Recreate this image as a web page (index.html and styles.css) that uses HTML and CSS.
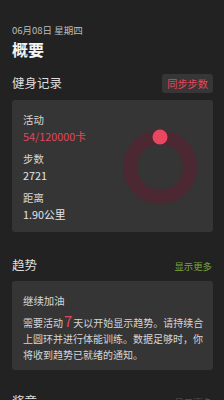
FILE: index.html
```html
<!DOCTYPE html>
<html lang="zh">
<head>
<meta charset="utf-8">
<link rel="stylesheet" href="styles.css">
</head>
<body>
<div class="page">
  <div class="date">06月08日 星期四</div>
  <h1 class="title">概要</h1>

  <div class="sec-head first">
    <span class="sec-title">健身记录</span>
    <span class="sync">同步步数</span>
  </div>
  <div class="card fit">
    <div class="stats">
      <div class="stat">
        <div class="label">活动</div>
        <div class="value pink">54/120000卡</div>
      </div>
      <div class="stat">
        <div class="label">步数</div>
        <div class="value">2721</div>
      </div>
      <div class="stat">
        <div class="label">距离</div>
        <div class="value">1.90公里</div>
      </div>
    </div>
    <svg class="ring" width="80" height="80" viewBox="0 0 80 80">
      <circle cx="40" cy="40" r="30" fill="none" stroke="#4c2832" stroke-width="14"/>
      <circle cx="40" cy="10" r="7.5" fill="#e8475f"/>
    </svg>
  </div>

  <div class="sec-head trend-head">
    <span class="sec-title">趋势</span>
    <span class="more">显示更多</span>
  </div>
  <div class="card trend">
    <div class="trend-title">继续加油</div>
    <p class="trend-text">需要活动<span class="big">7</span>天以开始显示趋势。请持续合上圆环并进行体能训练。数据足够时，你将收到趋势已就绪的通知。</p>
  </div>

  <div class="sec-head last">
    <span class="sec-title">奖章</span>
    <span class="more grey">显示更多</span>
  </div>
</div>
</body>
</html>
```

FILE: styles.css
```css
html, body {
  margin: 0;
  padding: 0;
  background: #222222;
  height: 100%;
  overflow: hidden;
}
body {
  font-family: "Noto Sans CJK SC", "Noto Sans", sans-serif;
  color: #e0e0e0;
}
.page {
  padding: 23px 12px 0 12px;
}
.date {
  font-size: 9.5px;
  line-height: 14px;
  color: #bdbdbd;
}
.title {
  margin: 2px 0 0 0;
  font-size: 16px;
  line-height: 20px;
  font-weight: 700;
  color: #f4f4f4;
}
.sec-head {
  display: flex;
  justify-content: space-between;
  align-items: center;
  height: 20px;
}
.sec-head.first {
  margin-top: 14px;
}
.sec-title {
  font-size: 12.5px;
  line-height: 20px;
  color: #dedede;
}
.sync {
  background: #363636;
  color: #e0475e;
  font-size: 10.2px;
  line-height: 19px;
  padding: 0 5px;
  border-radius: 3px;
  margin-right: -1px;
}
.card {
  background: #353535;
  border-radius: 3px;
  margin-right: -1px;
}
.fit {
  margin-top: 7px;
  display: flex;
  align-items: center;
  justify-content: space-between;
  padding: 12px 13px 10px 11px;
}
.stats {
  display: flex;
  flex-direction: column;
  gap: 7px;
}
.label {
  font-size: 10.4px;
  line-height: 16px;
  color: #d6d6d6;
}
.value {
  font-size: 10.8px;
  line-height: 16px;
  color: #e4e4e4;
}
.pink {
  color: #e0475e;
}
.ring {
  display: block;
}
.trend-head {
  margin-top: 23px;
}
.more {
  font-size: 9.4px;
  color: #78a53a;
  margin-top: 2px;
}
.more.grey {
  color: #555555;
}
.trend {
  margin-top: 6px;
  padding: 12px 9px 7px 11px;
}
.trend-title {
  font-size: 10.4px;
  line-height: 16px;
  color: #d6d6d6;
}
.trend-text {
  margin: 5px 0 0 0;
  font-size: 10px;
  line-height: 16px;
  color: #d6d6d6;
}
.big {
  font-size: 15px;
  color: #e0475e;
  line-height: 14px;
  padding: 0 1px;
}
.sec-head.last {
  margin-top: 21px;
}
```
